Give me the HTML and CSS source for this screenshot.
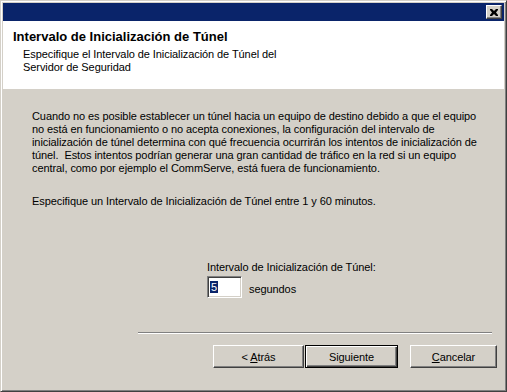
FILE: index.html
```html
<!DOCTYPE html>
<html lang="es">
<head>
  <meta charset="UTF-8">
  <title>Intervalo de Inicialización de Túnel</title>
  <link rel="stylesheet" href="styles.css">
</head>
<body>

  <div class="window">
    <div class="titlebar">
      <button class="close-btn" type="button" aria-label="Cerrar">
        <svg width="8" height="7" viewBox="0 0 8 7">
          <path d="M0 0h2l2 2 2-2h2v1l-2 2.5 2 2.5v1h-2l-2-2-2 2h-2v-1l2-2.5-2-2.5z" fill="#000"/>
        </svg>
      </button>
    </div>

    <div class="header">
      <h1>Intervalo de Inicialización de Túnel</h1>
      <p class="subtitle">Especifique el Intervalo de Inicialización de Túnel del<br>Servidor de Seguridad</p>
    </div>

    <div class="content">
      <p class="info">Cuando no es posible establecer un túnel hacia un equipo de destino debido a que el equipo<br>no está en funcionamiento o no acepta conexiones, la configuración del intervalo de<br>inicialización de túnel determina con qué frecuencia ocurrirán los intentos de inicialización de<br>túnel.&nbsp; Estos intentos podrían generar una gran cantidad de tráfico en la red si un equipo<br>central, como por ejemplo el CommServe, está fuera de funcionamiento.</p>

      <p class="info range">Especifique un Intervalo de Inicialización de Túnel entre 1 y 60 minutos.</p>

      <div class="field">
        <label for="interval">Intervalo de Inicialización de Túnel:</label>
        <div class="field-row">
          <div class="input-box" id="interval"><span class="selected">5</span></div>
          <span class="unit">segundos</span>
        </div>
      </div>

      <div class="separator"></div>

      <div class="buttons">
        <button class="btn back-btn" type="button">&lt; <u>A</u>trás</button>
        <button class="btn next-btn" type="button">Siguiente</button>
        <button class="btn cancel-btn" type="button"><u>C</u>ancelar</button>
      </div>
    </div>
  </div>

</body>
</html>
```

FILE: styles.css
```css
html, body {
  margin: 0;
  padding: 0;
  background: #d4d0c8;
}

body {
  font-family: "Liberation Sans", Arial, sans-serif;
  font-size: 11px;
  letter-spacing: -0.08px;
  color: #000;
}

.window {
  width: 507px;
  height: 392px;
  box-sizing: border-box;
  border: 1px solid;
  border-color: #d4d0c8 #404040 #404040 #d4d0c8;
  box-shadow: inset 1px 1px #fff, inset -1px -1px #808080;
  padding: 2px;
  background: #d4d0c8;
  display: flex;
  flex-direction: column;
}

.titlebar {
  height: 18px;
  background: #0a246a;
  display: flex;
  align-items: center;
  justify-content: flex-end;
  padding-right: 2px;
}

.close-btn {
  width: 16px;
  height: 14px;
  padding: 0;
  margin: 0;
  background: #d4d0c8;
  border: 1px solid;
  border-color: #fff #404040 #404040 #fff;
  box-shadow: inset -1px -1px #808080;
  display: flex;
  align-items: center;
  justify-content: center;
}

.header {
  height: 68px;
  background: #fff;
  box-sizing: border-box;
  padding: 8px 0 0 10px;
}

.header h1 {
  margin: 0;
  font-size: 13px;
  line-height: 16px;
  font-weight: bold;
  letter-spacing: 0;
}

.subtitle {
  margin: 3px 0 0 10px;
  line-height: 13px;
}

.content {
  flex: 1;
  padding: 21px 0 0 29px;
}

.info {
  margin: 0;
  line-height: 13px;
  white-space: nowrap;
}

.range {
  margin-top: 20px;
}

.field {
  margin: 53px 0 0 175px;
}

.field label {
  display: block;
  line-height: 13px;
}

.field-row {
  display: flex;
  align-items: center;
  margin-top: 2px;
}

.input-box {
  width: 35px;
  height: 22px;
  box-sizing: border-box;
  background: #fff;
  border: 1px solid;
  border-color: #808080 #fff #fff #808080;
  box-shadow: inset 1px 1px #404040, inset -1px -1px #d4d0c8;
  padding: 3px 0 0 2px;
  line-height: 14px;
}

.selected {
  background: #0a246a;
  color: #fff;
  padding: 0 1px;
}

.unit {
  margin-left: 7px;
  padding-top: 4px;
}

.separator {
  margin: 34px 0 0 106px;
  width: 354px;
  height: 1px;
  background: #808080;
  border-bottom: 1px solid #fff;
}

.buttons {
  display: flex;
  margin: 11px 0 0 181px;
}

.btn {
  height: 23px;
  box-sizing: border-box;
  font-family: "Liberation Sans", Arial, sans-serif;
  font-size: 11px;
  letter-spacing: -0.08px;
  color: #000;
  background: #d4d0c8;
  border: 1px solid;
  border-color: #fff #404040 #404040 #fff;
  box-shadow: inset -1px -1px #808080;
  padding: 0;
  margin: 0;
}

.back-btn {
  width: 91px;
}

.next-btn {
  width: 93px;
  margin-left: 1px;
  border: 1px solid #000;
  box-shadow: inset 1px 1px #fff, inset -1px -1px #404040, inset -2px -2px #808080;
}

.cancel-btn {
  width: 87px;
  margin-left: 12px;
}
```
